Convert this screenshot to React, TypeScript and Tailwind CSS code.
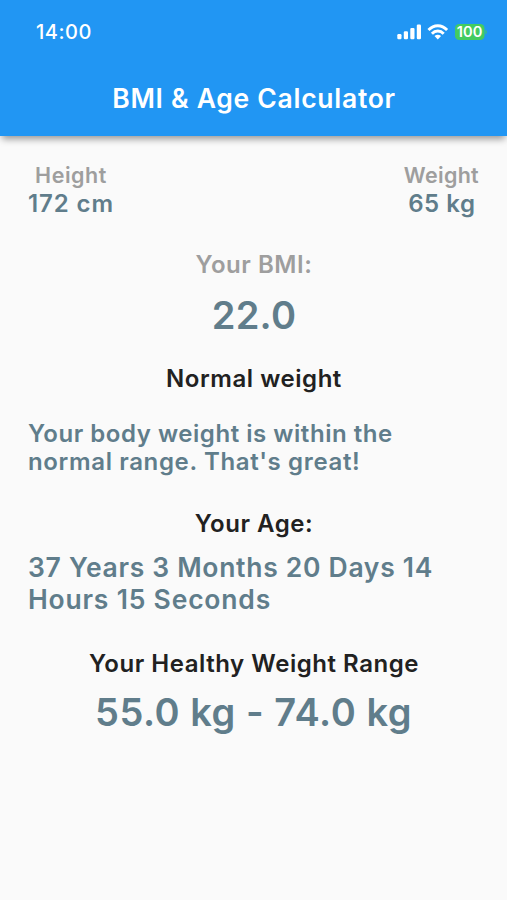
type LineProps = { text: string; className: string };

function Line({ text, className }: LineProps) {
  return <div className={`whitespace-nowrap ${className}`}>{text}</div>;
}

function StatusIcons() {
  return (
    <svg className="mt-[22px] mr-[19px] h-5 w-[92px]" viewBox="396 22 92 20" fill="#fff">
      <rect x="397.3" y="34" width="4.2" height="5.2" rx="1.2" />
      <rect x="403.8" y="31.2" width="4.2" height="8" rx="1.2" />
      <rect x="410.3" y="27.9" width="4.2" height="11.3" rx="1.2" />
      <rect x="416.8" y="24.6" width="4.2" height="14.6" rx="1.2" />
      <g fill="none" stroke="#fff" strokeWidth="2.9">
        <path d="M428.5 30C433.8 24.3 441.8 24.3 447.1 30" />
        <path d="M431.9 33.7C435.3 30.1 440.3 30.1 443.7 33.7" />
      </g>
      <path d="M434.5 36.1Q437.8 33.4 441.1 36.1L437.8 39.4Z" />
      <rect x="455" y="24" width="29.5" height="16" rx="4.3" fill="#43cb60" />
      <path d="M485.5 29.5Q488 32 485.5 34.5Z" fill="#43cb60" />
      <text x="469.6" y="37.2" textAnchor="middle" fontFamily="Inter, sans-serif" fontSize="14.3" fontWeight="600" textLength="25.5" lengthAdjust="spacingAndGlyphs">100</text>
    </svg>
  );
}

export default function App() {
  return (
    <div className="flex h-[900px] w-[507px] flex-col overflow-hidden bg-[#fafafa] font-['Inter',sans-serif] font-[625] text-[#607d8b]">
      <header className="h-[135.5px] shrink-0 bg-[#2196f3] text-white shadow-[0_5px_7px_-2px_rgba(0,0,0,0.4)]">
        <div className="flex h-[70px] justify-between">
          <Line text="14:00" className="pt-[20px] pl-[36px] text-[20px] leading-6 font-medium tracking-[0.5px]" />
          <StatusIcons />
        </div>
        <Line text="BMI & Age Calculator" className="pt-[12px] pl-px text-center text-[26.5px] leading-8 tracking-[0.72px]" />
      </header>
      <main className="flex flex-col px-7 pt-[25.5px] text-[24px] leading-7 tracking-[0.54px]">
        <div className="flex justify-between text-center">
          <div>
            <Line text="Height" className="text-[21.5px] text-[#9e9e9e]" />
            <Line text="172 cm" className="pt-px tracking-[0.9px]" />
          </div>
          <div>
            <Line text="Weight" className="text-[21.5px] text-[#9e9e9e] tracking-[0.3px]" />
            <Line text="65 kg" className="pt-px pl-px" />
          </div>
        </div>
        <Line text="Your BMI:" className="mt-[33px] pl-px text-center text-[#9e9e9e]" />
        <Line text="22.0" className="mt-[13px] pl-px text-center text-[38px] leading-[46px] tracking-[0.3px]" />
        <Line text="Normal weight" className="mt-[27px] pl-px text-center text-[#212121]" />
        <Line text="Your body weight is within the" className="mt-[27px]" />
        <Line text="normal range. That's great!" className="tracking-[0.64px]" />
        <Line text="Your Age:" className="mt-[34px] pl-px text-center text-[#212121]" />
        <Line text="37 Years 3 Months 20 Days 14" className="mt-[13px] text-[26.5px] leading-8 tracking-[0.7px]" />
        <Line text="Hours 15 Seconds" className="text-[26.5px] leading-8 tracking-[0.8px]" />
        <Line text="Your Healthy Weight Range" className="mt-[35px] pl-px text-center text-[#212121]" />
        <Line text="55.0 kg - 74.0 kg" className="mt-[11px] text-center text-[38px] leading-[46px]" />
      </main>
    </div>
  );
}
